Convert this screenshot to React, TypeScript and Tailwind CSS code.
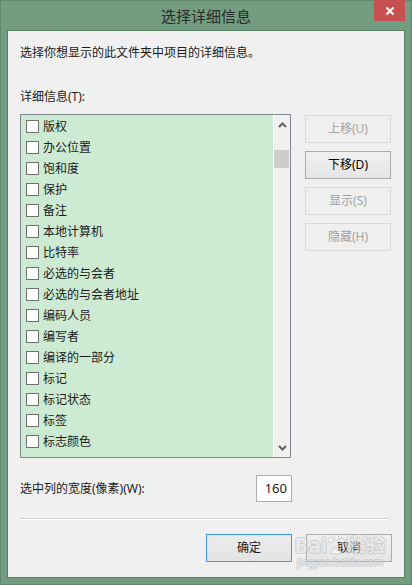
import React from "react";

const items = [
  "版权",
  "办公位置",
  "饱和度",
  "保护",
  "备注",
  "本地计算机",
  "比特率",
  "必选的与会者",
  "必选的与会者地址",
  "编码人员",
  "编写者",
  "编译的一部分",
  "标记",
  "标记状态",
  "标签",
  "标志颜色",
];

const font = "font-['Noto_Sans','Noto_Sans_CJK_SC',sans-serif]";

function SideButton({ label, enabled }: { label: string; enabled?: boolean }) {
  return (
    <div
      className={
        enabled
          ? "flex h-[28px] w-[86px] items-center justify-center border border-[#acacac] bg-gradient-to-b from-[#f0f0f0] to-[#e5e5e5] text-[12px] leading-[16px] text-black"
          : "flex h-[28px] w-[86px] items-center justify-center border border-[#d9d9d9] bg-[#efefef] text-[12px] leading-[16px] text-[#a3a3a3]"
      }
    >
      {label}
    </div>
  );
}

function Chevron({ up }: { up?: boolean }) {
  return (
    <svg width="9" height="6" viewBox="0 0 9 6" className="block">
      <path
        d={up ? "M1 5 L4.5 1.5 L8 5" : "M1 1 L4.5 4.5 L8 1"}
        fill="none"
        stroke="#606060"
        strokeWidth="2"
      />
    </svg>
  );
}

export default function App() {
  return (
    <div className={`${font} relative flex h-[585px] w-[412px] flex-col border border-[#5f8a6d] bg-[#729d80] px-[6px] pb-[6px]`}>
      {/* title bar */}
      <div className="relative flex h-[29px] items-center justify-center">
        <span className="text-[15px] leading-[20px] text-[#2a2a2a]">选择详细信息</span>
        <div className="absolute right-[0px] top-[-1px] flex h-[21px] w-[31px] items-center justify-center bg-[#c75050]">
          <svg width="10" height="10" viewBox="0 0 10 10">
            <path d="M1.5 1.5 L8.5 8.5 M8.5 1.5 L1.5 8.5" stroke="#fff" strokeWidth="2" />
          </svg>
        </div>
      </div>

      {/* client area */}
      <div className="flex flex-1 flex-col border border-[#5a7d65] bg-[#f0f0f0] px-[12px] pt-[14px] text-[12px] leading-[16px] text-[#1a1a1a]">
        <p>选择你想显示的此文件夹中项目的详细信息。</p>
        <p className="mt-[28px]">详细信息(T):</p>

        <div className="mt-[9px] flex">
          {/* list box */}
          <div className="flex h-[344px] w-[271px] border border-[#828790] bg-[#cdebd3]">
            <div className="flex flex-1 flex-col overflow-hidden pl-[5px] pt-[1px]">
              {items.map((it) => (
                <div key={it} className="flex h-[21px] shrink-0 items-center gap-[4px]">
                  <span className="h-[13px] w-[13px] shrink-0 border border-[#707070] bg-white" />
                  <span className="whitespace-nowrap">{it}</span>
                </div>
              ))}
            </div>
            <div className="flex w-[17px] flex-col border-l border-white bg-[#f0f0f0]">
              <div className="flex h-[17px] items-center justify-center pt-[2px]">
                <Chevron up />
              </div>
              <div className="mt-[18px] h-[18px] w-[15px] bg-[#cdcdcd]" />
              <div className="flex-1" />
              <div className="flex h-[17px] items-center justify-center pb-[2px]">
                <Chevron />
              </div>
            </div>
          </div>

          {/* side buttons */}
          <div className="ml-[14px] mt-[1px] flex flex-col gap-[8px]">
            <SideButton label="上移(U)" />
            <SideButton label="下移(D)" enabled />
            <SideButton label="显示(S)" />
            <SideButton label="隐藏(H)" />
          </div>
        </div>

        <div className="mt-[17px] flex w-[272px] items-center justify-between">
          <span>选中列的宽度(像素)(W):</span>
          <div className="flex h-[27px] w-[36px] items-start justify-end border border-[#abadb3] bg-white pr-[4px] pt-[4px] text-[13px] leading-[16px]">
            160
          </div>
        </div>

        <div className="mt-[16px] w-[369px] border-t border-[#d0d0d0] border-b border-b-white" />

        <div className="relative mt-[14px] flex justify-end gap-[14px]">
          <div className="flex h-[28px] w-[86px] items-center justify-center border border-[#3399ff] bg-gradient-to-b from-[#ececec] to-[#e3e3e3]">
            确定
          </div>
          <div className="flex h-[28px] w-[86px] items-center justify-center border border-[#acacac] bg-gradient-to-b from-[#f0f0f0] to-[#e5e5e5]">
            取消
          </div>
          {/* watermark */}
          <div className="pointer-events-none absolute left-[274px] top-[-2px] flex w-[92px] flex-col items-center text-white/70 opacity-50 [text-shadow:1px_0_0_#b0b0b0,-1px_0_0_#b0b0b0,0_1px_0_#b0b0b0,0_-1px_0_#b0b0b0]">
            <div className="flex items-end text-[21px] font-bold leading-[26px]">
              <span>Bai</span>
              <svg width="18" height="22" viewBox="0 0 18 22" className="mb-[2px]">
                <g fill="rgba(255,255,255,0.8)" stroke="#b0b0b0" strokeWidth="1">
                  <ellipse cx="4" cy="6" rx="2.3" ry="3" />
                  <ellipse cx="9.5" cy="3.5" rx="2.3" ry="3" />
                  <ellipse cx="15" cy="7" rx="2.3" ry="3" />
                  <path d="M3 19 Q9 8 15 19 Q9 22 3 19 Z" />
                </g>
              </svg>
              <span className="text-[20px]">经验</span>
            </div>
            <span className="mt-[-2px] text-[10px] leading-[12px]">jingyan.baidu.com</span>
          </div>
        </div>
      </div>
    </div>
  );
}
